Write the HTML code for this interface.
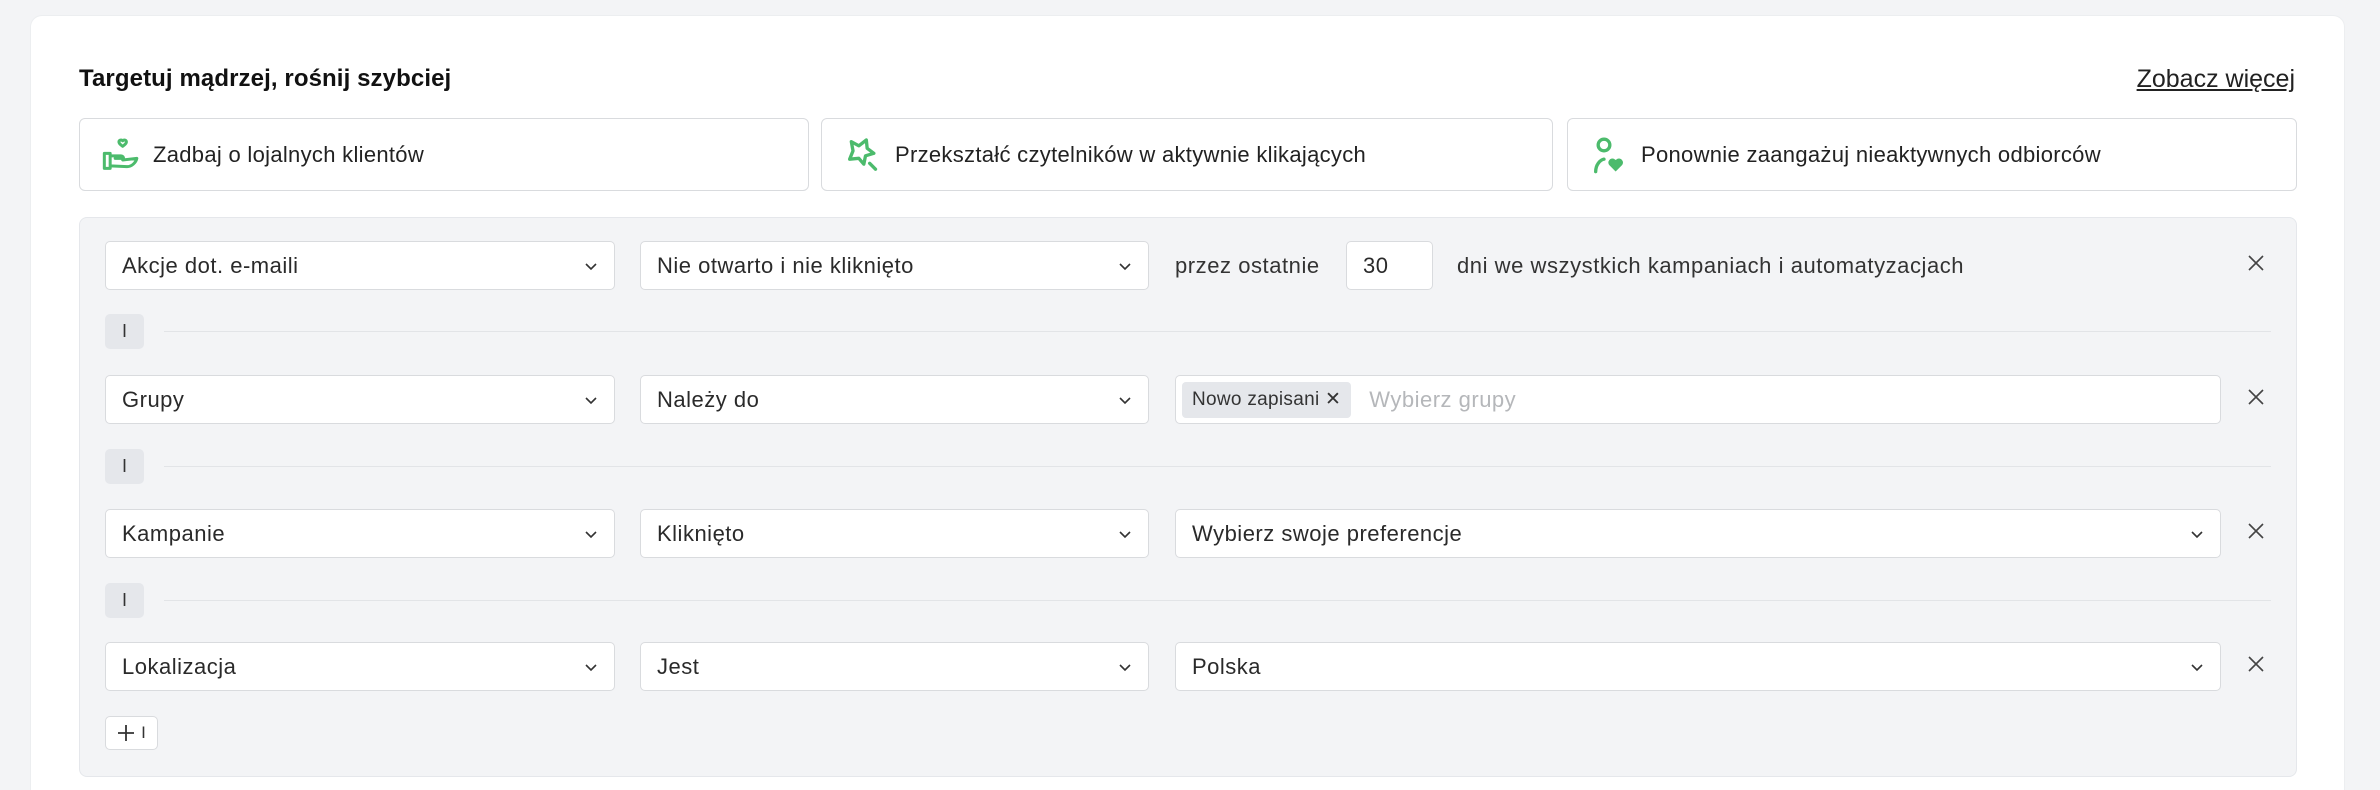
<!DOCTYPE html>
<html style="width:2380px;height:790px;overflow:hidden"><head><meta charset="utf-8"><style>
*{box-sizing:border-box;margin:0;padding:0}
html,body{width:2380px;height:790px;overflow:hidden}
body{background:#f3f4f6;font-family:"Liberation Sans",sans-serif;color:#222;position:relative}
.card{position:absolute;left:30px;top:15px;width:2315px;height:775px;background:#fff;border-radius:12px 12px 0 0;border:1px solid #eceef0;border-bottom:none}
.abs{position:absolute}
.title{left:79px;top:65px;font-size:24px;font-weight:bold;color:#111;letter-spacing:0.1px}
.more{right:85px;top:65px;font-size:25px;text-decoration:underline;color:#222}
.tile{top:118px;height:73px;border:1.5px solid #d9dbde;border-radius:6px;background:#fff;display:flex;align-items:center;font-size:22px;letter-spacing:0.3px;color:#222}
.tile svg{margin-left:21px;margin-right:12px}
.panel{left:79px;top:217px;width:2218px;height:560px;background:#f3f4f6;border:1px solid #e5e7eb;border-radius:8px}
.inp{height:49px;background:#fff;border:1.5px solid #d9dbde;border-radius:5px;font-size:22px;letter-spacing:0.5px;display:flex;align-items:center;padding-left:16px;color:#2a2a2a}
.chev{position:absolute;right:16px;top:17px}
.badge{left:105px;width:39px;height:35px;background:#e5e7eb;border-radius:5px;font-size:18px;display:flex;align-items:center;justify-content:center;color:#333}
.line{left:164px;width:2107px;height:1px;background:#e2e4e7}
.txt{font-size:22px;letter-spacing:0.55px;color:#333}
.x{left:2246px}
</style></head><body>
<div class="card"></div>
<div class="abs title">Targetuj mądrzej, rośnij szybciej</div>
<div class="abs more">Zobacz więcej</div>

<div class="abs tile" style="left:79px;width:730px">
<svg width="40" height="40" viewBox="0 0 24 24" fill="none" stroke="#4cbb6c" stroke-width="1.8" stroke-linejoin="round" stroke-linecap="round"><path d="M13 3.5c-.8-1-2.4-.4-2.2.9.2 1 2.2 2.4 2.2 2.4s2-1.4 2.2-2.4c.2-1.3-1.4-1.9-2.2-.9z"/><path d="M2 11h3.5v9H2zM5.5 12.5h6.5c1 0 1.5.8 1.5 1.5h-5M5.5 18.5l10 .5c3 0 5.5-2.5 6-5l-8.5 1"/></svg>
Zadbaj o lojalnych klientów</div>
<div class="abs tile" style="left:821px;width:732px">
<svg width="40" height="40" viewBox="0 0 24 24" fill="none" stroke="#4cbb6c" stroke-width="2" stroke-linejoin="round" stroke-linecap="round"><path d="M5 4l4.5 2.5L14 3l.5 5 4 3-5 1.5-1 5-3-3.5-5.5.5 2-5z"/><path d="M16 17l3.5 3.5"/></svg>
Przekształć czytelników w aktywnie klikających</div>
<div class="abs tile" style="left:1567px;width:730px">
<svg width="40" height="40" viewBox="0 0 24 24" fill="none" stroke="#4cbb6c" stroke-width="2" stroke-linecap="round"><circle cx="9" cy="6" r="3.5"/><path d="M4 22c0-4 2.5-7 5-7.5"/><path d="M16 20.5l-3-3c-1-1.2.3-3 1.7-2.2l1.3.9 1.3-.9c1.4-.8 2.7 1 1.7 2.2z" fill="#4cbb6c"/></svg>
Ponownie zaangażuj nieaktywnych odbiorców</div>

<div class="abs panel"></div>

<div class="abs inp" style="left:105px;top:241px;width:510px">Akcje dot. e-maili<svg class="chev" width="14" height="14" viewBox="0 0 14 14"><path d="M2 5l5 5 5-5" fill="none" stroke="#333" stroke-width="1.6"/></svg></div>
<div class="abs inp" style="left:640px;top:241px;width:509px">Nie otwarto i nie kliknięto<svg class="chev" width="14" height="14" viewBox="0 0 14 14"><path d="M2 5l5 5 5-5" fill="none" stroke="#333" stroke-width="1.6"/></svg></div>
<div class="abs txt" style="left:1175px;top:253px">przez ostatnie</div>
<div class="abs inp" style="left:1346px;top:241px;width:87px">30</div>
<div class="abs txt" style="left:1457px;top:253px">dni we wszystkich kampaniach i automatyzacjach</div>
<svg class="abs x" style="top:253px" width="20" height="20" viewBox="0 0 20 20"><path d="M3 3l14 14M17 3L3 17" stroke="#444" stroke-width="1.6"/></svg>

<div class="abs badge" style="top:314px">I</div><div class="abs line" style="top:331px"></div>

<div class="abs inp" style="left:105px;top:375px;width:510px">Grupy<svg class="chev" width="14" height="14" viewBox="0 0 14 14"><path d="M2 5l5 5 5-5" fill="none" stroke="#333" stroke-width="1.6"/></svg></div>
<div class="abs inp" style="left:640px;top:375px;width:509px">Należy do<svg class="chev" width="14" height="14" viewBox="0 0 14 14"><path d="M2 5l5 5 5-5" fill="none" stroke="#333" stroke-width="1.6"/></svg></div>
<div class="abs inp" style="left:1175px;top:375px;width:1046px;padding-left:6px">
<span style="background:#e5e7eb;border-radius:4px;height:36px;padding:0 10px;display:flex;align-items:center;font-size:19px;letter-spacing:0.3px;color:#333">Nowo zapisani&nbsp;✕</span>
<span style="margin-left:18px;color:#b5b7ba">Wybierz grupy</span></div>
<svg class="abs x" style="top:387px" width="20" height="20" viewBox="0 0 20 20"><path d="M3 3l14 14M17 3L3 17" stroke="#444" stroke-width="1.6"/></svg>

<div class="abs badge" style="top:449px">I</div><div class="abs line" style="top:466px"></div>

<div class="abs inp" style="left:105px;top:509px;width:510px">Kampanie<svg class="chev" width="14" height="14" viewBox="0 0 14 14"><path d="M2 5l5 5 5-5" fill="none" stroke="#333" stroke-width="1.6"/></svg></div>
<div class="abs inp" style="left:640px;top:509px;width:509px">Kliknięto<svg class="chev" width="14" height="14" viewBox="0 0 14 14"><path d="M2 5l5 5 5-5" fill="none" stroke="#333" stroke-width="1.6"/></svg></div>
<div class="abs inp" style="left:1175px;top:509px;width:1046px">Wybierz swoje preferencje<svg class="chev" width="14" height="14" viewBox="0 0 14 14"><path d="M2 5l5 5 5-5" fill="none" stroke="#333" stroke-width="1.6"/></svg></div>
<svg class="abs x" style="top:521px" width="20" height="20" viewBox="0 0 20 20"><path d="M3 3l14 14M17 3L3 17" stroke="#444" stroke-width="1.6"/></svg>

<div class="abs badge" style="top:583px">I</div><div class="abs line" style="top:600px"></div>

<div class="abs inp" style="left:105px;top:642px;width:510px">Lokalizacja<svg class="chev" width="14" height="14" viewBox="0 0 14 14"><path d="M2 5l5 5 5-5" fill="none" stroke="#333" stroke-width="1.6"/></svg></div>
<div class="abs inp" style="left:640px;top:642px;width:509px">Jest<svg class="chev" width="14" height="14" viewBox="0 0 14 14"><path d="M2 5l5 5 5-5" fill="none" stroke="#333" stroke-width="1.6"/></svg></div>
<div class="abs inp" style="left:1175px;top:642px;width:1046px">Polska<svg class="chev" width="14" height="14" viewBox="0 0 14 14"><path d="M2 5l5 5 5-5" fill="none" stroke="#333" stroke-width="1.6"/></svg></div>
<svg class="abs x" style="top:654px" width="20" height="20" viewBox="0 0 20 20"><path d="M3 3l14 14M17 3L3 17" stroke="#444" stroke-width="1.6"/></svg>

<div class="abs" style="left:105px;top:716px;width:53px;height:34px;background:#fff;border:1.5px solid #d9dbde;border-radius:5px;display:flex;align-items:center;justify-content:center;gap:6px">
<svg width="18" height="18" viewBox="0 0 18 18"><path d="M9 1v16M1 9h16" stroke="#333" stroke-width="1.8"/></svg><span style="font-size:17px;color:#333">I</span></div>
</body></html>
